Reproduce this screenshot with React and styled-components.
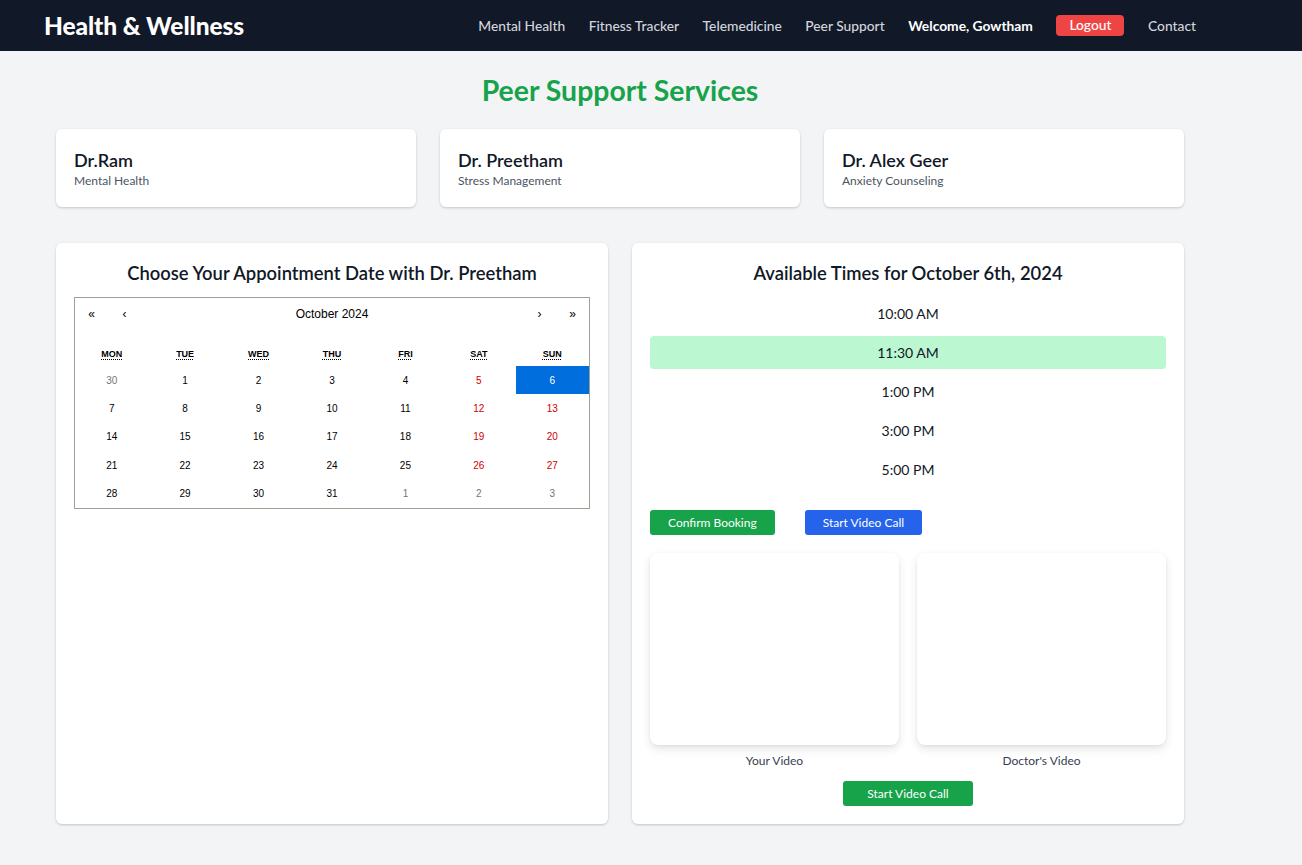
import React from "react";
import styled, { createGlobalStyle } from "styled-components";

const Global = createGlobalStyle`
  html, body { margin: 0; padding: 0; background: #f3f4f6; }
  body { font-family: "Segoe UI", Lato, "Noto Sans", sans-serif; color: #111827; }
  * { box-sizing: border-box; }
`;

const NavBar = styled.nav`
  background: #111827;
  height: 51px;
`;
const NavInner = styled.div`
  width: 1240px;
  height: 100%;
  padding: 0 44px;
  display: flex;
  align-items: center;
  justify-content: space-between;
`;
const Logo = styled.div`
  color: #fff;
  font-size: 24.5px;
  font-weight: 900;
  letter-spacing: -0.1px;
`;
const NavLinks = styled.div`
  display: flex;
  align-items: center;
  gap: 23.5px;
`;
const NavLink = styled.span`
  color: ${(p) => (p.$strong ? "#ffffff" : "#d1d5db")};
  font-size: 13.8px;
  font-weight: ${(p) => (p.$strong ? 700 : 500)};
`;
const LogoutBtn = styled.span`
  background: #ef4444;
  color: #fff;
  font-size: 13.8px;
  font-weight: 500;
  padding: 2px 13px 3px;
  border-radius: 4px;
  line-height: 16px;
`;

const Main = styled.main`
  width: 1240px;
  padding: 22px 56px 40px;
`;
const PageTitle = styled.h1`
  margin: 0 0 22px;
  text-align: center;
  color: #16a34a;
  font-size: 28.4px;
  font-weight: 700;
  line-height: 34px;
`;
const DoctorGrid = styled.div`
  display: grid;
  grid-template-columns: repeat(3, 1fr);
  gap: 24px;
  margin-bottom: 36px;
`;
const Card = styled.div`
  background: #fff;
  border-radius: 6px;
  box-shadow: 0 1px 3px rgba(0,0,0,0.12), 0 1px 2px rgba(0,0,0,0.08);
`;
const DoctorCard = styled(Card)`
  height: 78px;
  padding: 19px 18px;
`;
const DoctorName = styled.div`
  font-size: 18px;
  font-weight: 600;
  line-height: 24px;
`;
const DoctorSpec = styled.div`
  font-size: 12px;
  color: #4b5563;
  line-height: 17px;
`;

const PanelGrid = styled.div`
  display: grid;
  grid-template-columns: 1fr 1fr;
  gap: 24px;
`;
const Panel = styled(Card)`
  padding: 18px;
  display: flex;
  flex-direction: column;
`;
const PanelTitle = styled.h2`
  margin: 0 0 12px;
  text-align: center;
  font-size: 18.4px;
  font-weight: 600;
  line-height: 24px;
`;

const Calendar = styled.div`
  border: 1px solid #a0a096;
  font-family: "Liberation Sans", Arial, sans-serif;
  background: #fff;
`;
const CalNav = styled.div`
  display: flex;
  align-items: center;
  height: 32px;
  margin-bottom: 8px;
`;
const CalArrow = styled.span`
  width: 33px;
  text-align: center;
  font-size: 12px;
  color: #000;
`;
const CalLabel = styled.span`
  flex: 1;
  text-align: center;
  font-size: 12px;
  color: #000;
`;
const WeekRow = styled.div`
  display: grid;
  grid-template-columns: repeat(7, 1fr);
  height: 28px;
  align-items: center;
  text-align: center;
`;
const Weekday = styled.abbr`
  font-size: 9px;
  font-weight: 700;
  text-transform: uppercase;
  text-decoration: underline dotted;
  text-underline-offset: 2px;
  color: #000;
`;
const DayGrid = styled.div`
  display: grid;
  grid-template-columns: repeat(7, 1fr);
  grid-auto-rows: 28.4px;
`;
const Day = styled.div`
  display: flex;
  align-items: center;
  justify-content: center;
  font-size: 10px;
  color: ${(p) => (p.$active ? "#fff" : p.$other ? "#757575" : p.$weekend ? "#d10000" : "#000")};
  background: ${(p) => (p.$active ? "#006edc" : "transparent")};
`;

const SlotList = styled.div`
  display: flex;
  flex-direction: column;
  gap: 6px;
`;
const Slot = styled.div`
  height: 33px;
  display: flex;
  align-items: center;
  justify-content: center;
  font-size: 14px;
  border-radius: 4px;
  background: ${(p) => (p.$selected ? "#bbf7d0" : "transparent")};
`;
const ButtonRow = styled.div`
  display: flex;
  gap: 30px;
  margin-top: 24px;
`;
const Button = styled.button`
  border: none;
  border-radius: 3px;
  height: 25px;
  padding: 0 ${(p) => p.$px || 18}px;
  font-family: inherit;
  font-size: 12px;
  color: #fff;
  background: ${(p) => (p.$blue ? "#2563eb" : "#16a34a")};
`;
const VideoGrid = styled.div`
  display: grid;
  grid-template-columns: 1fr 1fr;
  gap: 18px;
  margin-top: 18px;
`;
const VideoCol = styled.div`
  display: flex;
  flex-direction: column;
  align-items: center;
`;
const VideoBox = styled.div`
  width: 100%;
  height: 192px;
  background: #fff;
  border-radius: 8px;
  box-shadow: 0 4px 10px rgba(0,0,0,0.10), 0 1px 3px rgba(0,0,0,0.06);
`;
const VideoLabel = styled.div`
  margin-top: 7px;
  font-size: 12px;
  line-height: 17px;
  color: #374151;
`;
const Center = styled.div`
  display: flex;
  justify-content: center;
  margin-top: 12px;
`;

const doctors = [
  ["Dr.Ram", "Mental Health"],
  ["Dr. Preetham", "Stress Management"],
  ["Dr. Alex Geer", "Anxiety Counseling"],
];
const weekdays = ["Mon", "Tue", "Wed", "Thu", "Fri", "Sat", "Sun"];
const days = [];
days.push({ n: 30, other: true });
for (let i = 1; i <= 31; i++) days.push({ n: i });
days.push({ n: 1, other: true }, { n: 2, other: true }, { n: 3, other: true });
const times = ["10:00 AM", "11:30 AM", "1:00 PM", "3:00 PM", "5:00 PM"];

export default function App() {
  return (
    <>
      <Global />
      <NavBar>
        <NavInner>
          <Logo>Health &amp; Wellness</Logo>
          <NavLinks>
            <NavLink>Mental Health</NavLink>
            <NavLink>Fitness Tracker</NavLink>
            <NavLink>Telemedicine</NavLink>
            <NavLink>Peer Support</NavLink>
            <NavLink $strong>Welcome, Gowtham</NavLink>
            <LogoutBtn>Logout</LogoutBtn>
            <NavLink>Contact</NavLink>
          </NavLinks>
        </NavInner>
      </NavBar>
      <Main>
        <PageTitle>Peer Support Services</PageTitle>
        <DoctorGrid>
          {doctors.map(([n, s]) => (
            <DoctorCard key={n}>
              <DoctorName>{n}</DoctorName>
              <DoctorSpec>{s}</DoctorSpec>
            </DoctorCard>
          ))}
        </DoctorGrid>
        <PanelGrid>
          <Panel>
            <PanelTitle>Choose Your Appointment Date with Dr. Preetham</PanelTitle>
            <Calendar>
              <CalNav>
                <CalArrow>«</CalArrow>
                <CalArrow>‹</CalArrow>
                <CalLabel>October 2024</CalLabel>
                <CalArrow>›</CalArrow>
                <CalArrow>»</CalArrow>
              </CalNav>
              <WeekRow>
                {weekdays.map((w) => (
                  <div key={w}>
                    <Weekday title={w}>{w}</Weekday>
                  </div>
                ))}
              </WeekRow>
              <DayGrid>
                {days.map((d, i) => (
                  <Day
                    key={i}
                    $other={d.other}
                    $weekend={i % 7 >= 5}
                    $active={!d.other && d.n === 6}
                  >
                    {d.n}
                  </Day>
                ))}
              </DayGrid>
            </Calendar>
          </Panel>
          <Panel>
            <PanelTitle>Available Times for October 6th, 2024</PanelTitle>
            <SlotList>
              {times.map((t) => (
                <Slot key={t} $selected={t === "11:30 AM"}>
                  {t}
                </Slot>
              ))}
            </SlotList>
            <ButtonRow>
              <Button>Confirm Booking</Button>
              <Button $blue>Start Video Call</Button>
            </ButtonRow>
            <VideoGrid>
              <VideoCol>
                <VideoBox />
                <VideoLabel>Your Video</VideoLabel>
              </VideoCol>
              <VideoCol>
                <VideoBox />
                <VideoLabel>Doctor's Video</VideoLabel>
              </VideoCol>
            </VideoGrid>
            <Center>
              <Button $px={24}>Start Video Call</Button>
            </Center>
          </Panel>
        </PanelGrid>
      </Main>
    </>
  );
}
